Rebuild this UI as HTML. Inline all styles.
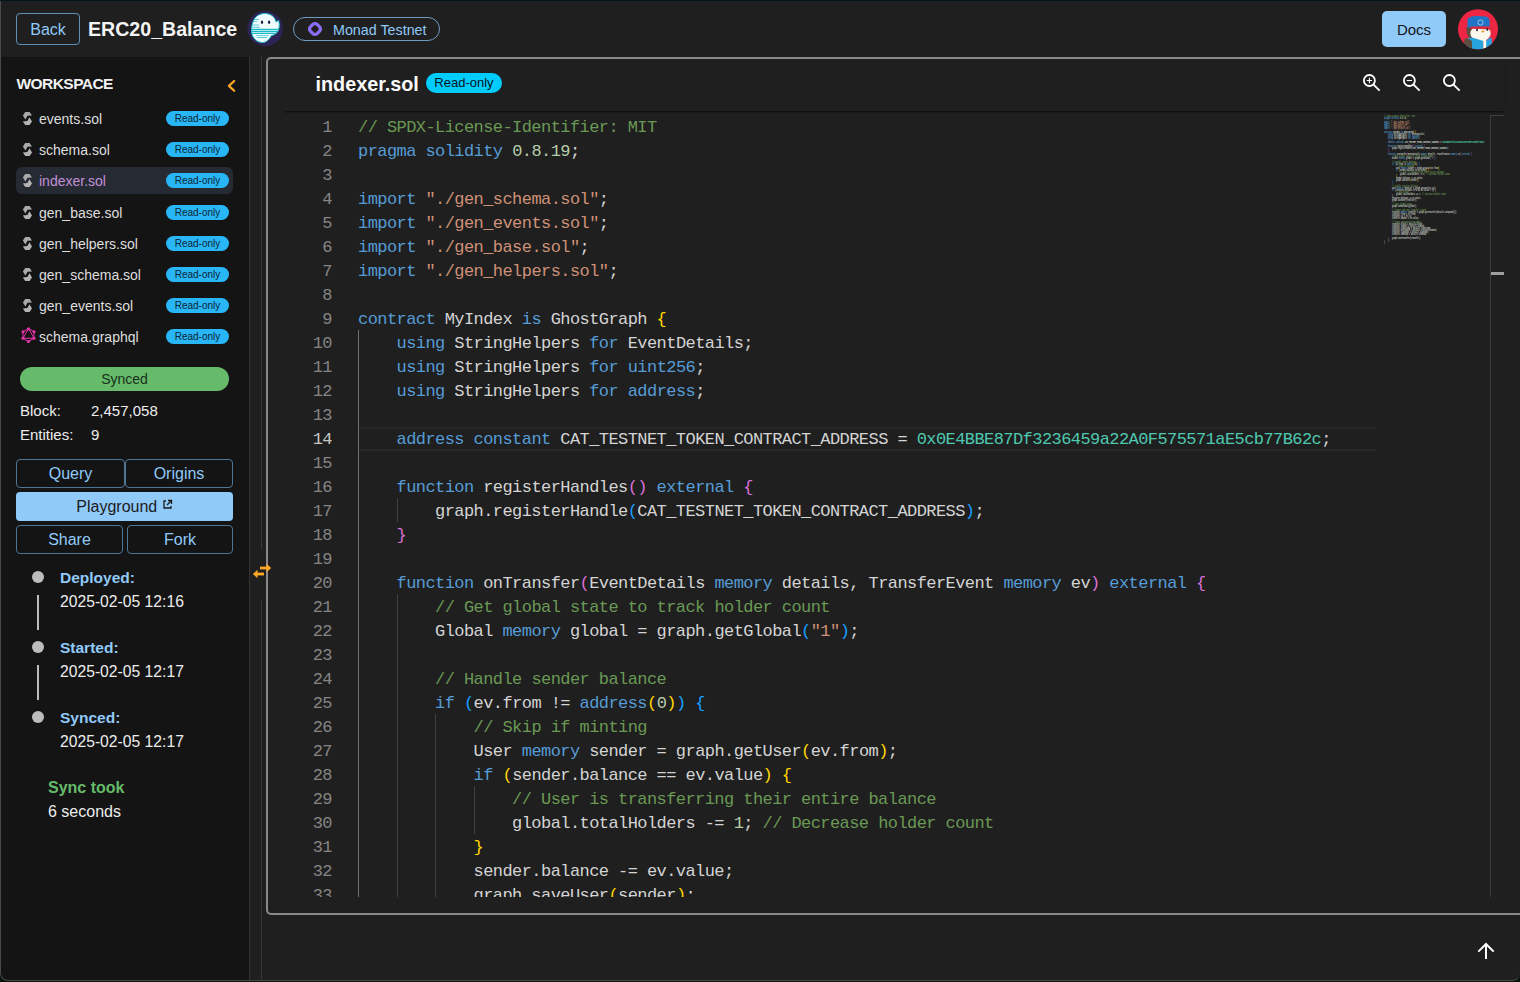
<!DOCTYPE html>
<html><head><meta charset="utf-8">
<style>
*{box-sizing:border-box;margin:0;padding:0}
html,body{width:1520px;height:982px;overflow:hidden;background:#08140c}
body{position:relative;font-family:"Liberation Sans",sans-serif}
.abs{position:absolute}
#app{position:absolute;left:0;top:0;width:1520px;height:981px;background:#1f1f1f;border-radius:0 0 8px 8px;overflow:hidden}
#frame{position:absolute;left:0;top:-10px;width:1520px;height:991px;border-left:1px solid #4a4a4a;border-right:0;border-bottom:1px solid #4a4a4a;border-radius:0 0 8px 8px;pointer-events:none}
#topline{position:absolute;left:0;top:0;width:1520px;height:1px;background:#07141b}
.btn-o{position:absolute;border:1px solid #5f8fb3;border-radius:4px;color:#90caf9;font-size:16px;text-align:center}
#sidebar{position:absolute;left:0;top:57px;width:249px;height:925px;background:#141414}
.file{position:absolute;left:16px;width:217px;height:27px;border-radius:6px}
.file .nm{position:absolute;left:23px;top:6px;font-size:14px;color:#dedede;white-space:nowrap}
.file .ro{position:absolute;left:150px;top:6px;width:63px;height:15px;border-radius:8px;background:#29b6f6;color:#0a2433;font-size:10px;line-height:16px;text-align:center}
.file .ic{position:absolute;left:7px;top:5px}
.cl{position:absolute;left:358px;height:24px;line-height:24px;padding-top:2px;font-family:"Liberation Mono",monospace;font-size:17px;white-space:pre;letter-spacing:-0.57px}
.ln{position:absolute;left:291px;width:41px;height:24px;line-height:24px;padding-top:2px;font-family:"Liberation Mono",monospace;font-size:17px;letter-spacing:-0.57px;text-align:right}
#mm i{position:absolute;height:2px;opacity:0.5}
.tl-dot{position:absolute;left:32px;width:12px;height:12px;border-radius:50%;background:#bdbdbd}
.tl-line{position:absolute;left:37px;width:2px;height:36px;background:#bdbdbd}
.tl-h{position:absolute;left:60px;font-size:15.5px;font-weight:bold;color:#90caf9}
.tl-d{position:absolute;left:60px;font-size:15.7px;color:#ececec}
</style></head>
<body>
<div id="app">
  <!-- HEADER -->
  <div class="btn-o" style="left:16px;top:13px;width:64px;height:32px;line-height:32px">Back</div>
  <div class="abs" style="left:88px;top:18px;font-size:19.6px;font-weight:bold;color:#f4f4f4;white-space:nowrap">ERC20_Balance</div>
  <!-- ghost logo -->
  <svg class="abs" style="left:247px;top:11px" width="36" height="36" viewBox="0 0 36 36">
    <defs><clipPath id="gh"><path d="M18 2.5 C24 2.5 28.5 6.5 28.8 11 L31.5 9.5 C32.5 12 32.5 16 31.5 19 C30 23 26 24 24 25 C22 29 19 31.5 15.5 31.5 C9 31.5 4.5 26 4.5 19.5 C4.5 14 6 10 8 7 C10.5 4 14 2.5 18 2.5 Z"/></clipPath></defs>
    <circle cx="18.2" cy="17.6" r="17.8" fill="#2b2352"/>
    <path d="M18 2.5 C24 2.5 28.5 6.5 28.8 11 L31.5 9.5 C32.5 12 32.5 16 31.5 19 C30 23 26 24 24 25 C22 29 19 31.5 15.5 31.5 C9 31.5 4.5 26 4.5 19.5 C4.5 14 6 10 8 7 C10.5 4 14 2.5 18 2.5 Z" fill="#effbfd" stroke="#22c3d0" stroke-width="1"/>
    <g clip-path="url(#gh)" fill="#1ab9c7">
      <rect x="4" y="17.8" width="30" height="1.3"/>
      <rect x="4" y="19.8" width="30" height="1.3"/>
      <rect x="4" y="21.8" width="30" height="1.2"/>
      <rect x="4" y="8" width="8" height="0.9" opacity="0.7"/>
      <rect x="4" y="10" width="6" height="0.9" opacity="0.7"/>
      <rect x="4" y="13.6" width="8" height="0.9" opacity="0.7"/>
      <rect x="4" y="15.8" width="9" height="0.9" opacity="0.7"/>
      <rect x="9" y="24" width="13" height="1" opacity="0.6"/>
      <rect x="10" y="26" width="10" height="0.9" opacity="0.8"/>
    </g>
    <ellipse cx="15" cy="11.3" rx="1.1" ry="1.7" fill="#1a1840"/>
    <ellipse cx="22.1" cy="11.3" rx="1.1" ry="1.7" fill="#1a1840"/>
  </svg>
  <!-- monad pill -->
  <div class="abs" style="left:293px;top:17px;width:147px;height:24px;border:1px solid #6f9cc2;border-radius:12px"></div>
  <svg class="abs" style="left:305px;top:19px" width="20" height="20" viewBox="0 0 20 20">
    <rect x="5.25" y="5.25" width="9.5" height="9.5" rx="3" transform="rotate(45 10 10)" fill="none" stroke="#8b6df5" stroke-width="3.3"/>
  </svg>
  <div class="abs" style="left:333px;top:21.5px;font-size:14.3px;color:#90caf9;white-space:nowrap">Monad Testnet</div>
  <!-- docs -->
  <div class="abs" style="left:1382px;top:11px;width:64px;height:36px;border-radius:5px;background:#90caf9;color:#161616;font-size:15px;line-height:37px;text-align:center">Docs</div>
  <!-- avatar -->
  <svg class="abs" style="left:1455px;top:6px" width="46" height="46" viewBox="0 0 46 46">
    <defs><clipPath id="av"><circle cx="23" cy="23.2" r="20"/></clipPath></defs>
    <g clip-path="url(#av)">
      <rect width="46" height="46" fill="#ee2644"/>
      <path d="M11.5 21 C11 26 12.5 30 15 33 L18 33 L18 21Z" fill="#5b4f40"/>
      <ellipse cx="25.5" cy="27.5" rx="10.2" ry="7.8" fill="#fbf9ee"/>
      <path d="M12 33 C14 31 18 31.5 22 33 L28.5 35 L28.5 46 L12 46Z" fill="#27a4de"/>
      <path d="M31 35 C33 33 35 31.5 36.5 31.5 L37.5 46 L31 46Z" fill="#27a4de"/>
      <rect x="28.3" y="33" width="2.9" height="13" fill="#fbf9ee"/>
      <path d="M9.5 33 C12 32 15.5 33 17 35.5 L17 46 L8 46Z" fill="#5b4f40"/>
      <path d="M12.5 21.5 L12.5 14 C13 11 17 10 22 10 L31 10.5 C33.5 11 34.7 13 34.7 16 L34.7 21 Z" fill="#1f74c8"/>
      <path d="M15.5 20.5 L34.5 20.3 L38.8 22 L37.5 23.5 L15.5 22.8 Z" fill="#d82a40"/>
      <circle cx="25.5" cy="16.5" r="2.6" fill="none" stroke="#a8cde8" stroke-width="0.9"/>
      <ellipse cx="22" cy="24" rx="0.9" ry="1.2" fill="#1d1d1d"/>
      <ellipse cx="32.3" cy="23.5" rx="0.9" ry="1.2" fill="#1d1d1d"/>
      <ellipse cx="27.9" cy="25.5" rx="1.6" ry="0.9" fill="#e8a23b"/>
    </g>
  </svg>

  <!-- SIDEBAR -->
  <div id="sidebar">
    <div class="abs" style="left:16.5px;top:17.5px;font-size:15.5px;font-weight:bold;color:#f2f2f2;letter-spacing:-0.55px">WORKSPACE</div>
    <svg class="abs" style="left:220px;top:18px" width="20" height="20" viewBox="220 75 20 20"><path d="M234.2 81 L228.9 85.9 L234.2 90.8" fill="none" stroke="#ffa726" stroke-width="2.2" stroke-linecap="round" stroke-linejoin="round"/></svg>
    <div class="file" style="top:48px;"><svg class="ic" style="left:3px;top:4px" width="18" height="19" viewBox="0 0 18 19"><path d="M6.2 2.9 L10.6 2.9 L13 6.6 L8.5 6.8 L6.4 10.5 L3.9 6.6Z" fill="#a9a9a9"/><path d="M10.5 8.3 L13 12.4 L10.6 16 L6.2 16 L3.9 12.4 L8.3 12Z" fill="#b3b3b3"/></svg><div class="nm" style="">events.sol</div><div class="ro">Read-only</div></div>
<div class="file" style="top:79px;"><svg class="ic" style="left:3px;top:4px" width="18" height="19" viewBox="0 0 18 19"><path d="M6.2 2.9 L10.6 2.9 L13 6.6 L8.5 6.8 L6.4 10.5 L3.9 6.6Z" fill="#a9a9a9"/><path d="M10.5 8.3 L13 12.4 L10.6 16 L6.2 16 L3.9 12.4 L8.3 12Z" fill="#b3b3b3"/></svg><div class="nm" style="">schema.sol</div><div class="ro">Read-only</div></div>
<div class="file" style="top:110px;background:#262a33;"><svg class="ic" style="left:3px;top:4px" width="18" height="19" viewBox="0 0 18 19"><path d="M6.2 2.9 L10.6 2.9 L13 6.6 L8.5 6.8 L6.4 10.5 L3.9 6.6Z" fill="#a9a9a9"/><path d="M10.5 8.3 L13 12.4 L10.6 16 L6.2 16 L3.9 12.4 L8.3 12Z" fill="#b3b3b3"/></svg><div class="nm" style="color:#c38fd6;">indexer.sol</div><div class="ro">Read-only</div></div>
<div class="file" style="top:142px;"><svg class="ic" style="left:3px;top:4px" width="18" height="19" viewBox="0 0 18 19"><path d="M6.2 2.9 L10.6 2.9 L13 6.6 L8.5 6.8 L6.4 10.5 L3.9 6.6Z" fill="#a9a9a9"/><path d="M10.5 8.3 L13 12.4 L10.6 16 L6.2 16 L3.9 12.4 L8.3 12Z" fill="#b3b3b3"/></svg><div class="nm" style="">gen_base.sol</div><div class="ro">Read-only</div></div>
<div class="file" style="top:173px;"><svg class="ic" style="left:3px;top:4px" width="18" height="19" viewBox="0 0 18 19"><path d="M6.2 2.9 L10.6 2.9 L13 6.6 L8.5 6.8 L6.4 10.5 L3.9 6.6Z" fill="#a9a9a9"/><path d="M10.5 8.3 L13 12.4 L10.6 16 L6.2 16 L3.9 12.4 L8.3 12Z" fill="#b3b3b3"/></svg><div class="nm" style="">gen_helpers.sol</div><div class="ro">Read-only</div></div>
<div class="file" style="top:204px;"><svg class="ic" style="left:3px;top:4px" width="18" height="19" viewBox="0 0 18 19"><path d="M6.2 2.9 L10.6 2.9 L13 6.6 L8.5 6.8 L6.4 10.5 L3.9 6.6Z" fill="#a9a9a9"/><path d="M10.5 8.3 L13 12.4 L10.6 16 L6.2 16 L3.9 12.4 L8.3 12Z" fill="#b3b3b3"/></svg><div class="nm" style="">gen_schema.sol</div><div class="ro">Read-only</div></div>
<div class="file" style="top:235px;"><svg class="ic" style="left:3px;top:4px" width="18" height="19" viewBox="0 0 18 19"><path d="M6.2 2.9 L10.6 2.9 L13 6.6 L8.5 6.8 L6.4 10.5 L3.9 6.6Z" fill="#a9a9a9"/><path d="M10.5 8.3 L13 12.4 L10.6 16 L6.2 16 L3.9 12.4 L8.3 12Z" fill="#b3b3b3"/></svg><div class="nm" style="">gen_events.sol</div><div class="ro">Read-only</div></div>
<div class="file" style="top:266px;"><svg class="ic" style="left:5px;top:4px" width="15" height="17" viewBox="0 0 15 17"><g fill="none" stroke="#e535ab" stroke-width="1"><path d="M7.5 1.5 L13 4.75 L13 11.25 L7.5 14.5 L2 11.25 L2 4.75Z"/><path d="M7.5 1.5 L13 11.25 L2 11.25Z"/></g><g fill="#e535ab"><circle cx="7.5" cy="1.8" r="1.6"/><circle cx="13" cy="4.75" r="1.6"/><circle cx="13" cy="11.25" r="1.6"/><circle cx="7.5" cy="14.5" r="1.6"/><circle cx="2" cy="11.25" r="1.6"/><circle cx="2" cy="4.75" r="1.6"/></g></svg><div class="nm" style="">schema.graphql</div><div class="ro">Read-only</div></div>
    <div class="abs" style="left:20px;top:310px;width:209px;height:24px;border-radius:12px;background:#66bb6a;color:#17301a;font-size:14px;line-height:24px;text-align:center">Synced</div>
    <div class="abs" style="left:20px;top:345px;font-size:15px;color:#ededed">Block:</div>
    <div class="abs" style="left:91px;top:345px;font-size:15px;color:#ededed">2,457,058</div>
    <div class="abs" style="left:20px;top:369px;font-size:15px;color:#ededed">Entities:</div>
    <div class="abs" style="left:91px;top:369px;font-size:15px;color:#ededed">9</div>
    <div class="btn-o" style="left:16px;top:402px;width:109px;height:29px;line-height:27px;border-color:#4f7594">Query</div>
    <div class="btn-o" style="left:125px;top:402px;width:108px;height:29px;line-height:27px;border-color:#4f7594">Origins</div>
    <div class="abs" style="left:16px;top:435px;width:217px;height:29px;border-radius:4px;background:#90caf9;color:#1b1b1b;font-size:16px;line-height:29px;text-align:center">Playground <svg style="vertical-align:2px" width="11" height="11" viewBox="0 0 11 11"><path d="M4 2 H2 V9 H9 V7" fill="none" stroke="#1b1b1b" stroke-width="1.3"/><path d="M5 6 L9.5 1.5 M6 1.5 H9.5 V5" fill="none" stroke="#1b1b1b" stroke-width="1.3"/></svg></div>
    <div class="btn-o" style="left:16px;top:468px;width:107px;height:29px;line-height:27px;border-color:#4f7594">Share</div>
    <div class="btn-o" style="left:127px;top:468px;width:106px;height:29px;line-height:27px;border-color:#4f7594">Fork</div>
    <!-- timeline -->
    <div class="tl-dot" style="top:514px"></div>
    <div class="tl-line" style="top:538px;height:35px"></div>
    <div class="tl-h" style="top:512px">Deployed:</div>
    <div class="tl-d" style="top:536px">2025-02-05 12:16</div>
    <div class="tl-dot" style="top:584px"></div>
    <div class="tl-line" style="top:608px;height:35px"></div>
    <div class="tl-h" style="top:582px">Started:</div>
    <div class="tl-d" style="top:606px">2025-02-05 12:17</div>
    <div class="tl-dot" style="top:654px"></div>
    <div class="tl-h" style="top:652px">Synced:</div>
    <div class="tl-d" style="top:676px">2025-02-05 12:17</div>
    <div class="abs" style="left:48px;top:722px;font-size:16px;font-weight:bold;color:#66bb6a">Sync took</div>
    <div class="abs" style="left:48px;top:746px;font-size:16px;color:#ececec">6 seconds</div>
  </div>

  <!-- splitter -->
  <div class="abs" style="left:249px;top:57px;width:1px;height:925px;background:#333"></div>
  <div class="abs" style="left:261px;top:57px;width:1px;height:492px;background:#383838"></div>
  <div class="abs" style="left:261px;top:600px;width:1px;height:382px;background:#383838"></div>
  <svg class="abs" style="left:250px;top:560px;z-index:5" width="24" height="22" viewBox="250 560 24 22">
    <rect x="260" y="566.6" width="8" height="2.8" fill="#ffa726"/><path d="M266.5 563.8 L271.2 568 L266.5 572.2Z" fill="#ffa726"/>
    <rect x="256" y="572.6" width="8" height="2.8" fill="#ffa726"/><path d="M257.5 569.8 L252.8 574 L257.5 578.2Z" fill="#ffa726"/>
  </svg>

  <!-- EDITOR -->
  <div class="abs" style="left:266px;top:57px;width:1260px;height:858px;border:2px solid #8a8a8a;border-radius:5px"></div>
  <div class="abs" style="left:284px;top:59px;width:1220px;height:52px;background:#1f1f1f;box-shadow:0 2px 2px -1px rgba(0,0,0,0.6)"></div>
  <div class="abs" style="left:315.5px;top:73px;font-size:19.8px;font-weight:bold;color:#fafafa;white-space:nowrap">indexer.sol</div>
  <div class="abs" style="left:426px;top:73px;width:76px;height:20px;border-radius:10px;background:#00ccfc;color:#02131c;font-size:13px;line-height:20px;text-align:center">Read-only</div>
  <!-- zoom icons -->
  <svg class="abs" style="left:1362px;top:73px" width="20" height="20" viewBox="0 0 20 20"><circle cx="7.4" cy="7.5" r="5.5" fill="none" stroke="#fff" stroke-width="1.8"/><path d="M11.4 11.5 L17.6 17.7" stroke="#fff" stroke-width="1.8"/><path d="M7.4 4.8 V10.2 M4.7 7.5 H10.1" stroke="#fff" stroke-width="1.1"/></svg>
  <svg class="abs" style="left:1402px;top:73px" width="20" height="20" viewBox="0 0 20 20"><circle cx="7.4" cy="7.5" r="5.5" fill="none" stroke="#fff" stroke-width="1.8"/><path d="M11.4 11.5 L17.6 17.7" stroke="#fff" stroke-width="1.8"/><path d="M4.7 7.5 H10.1" stroke="#fff" stroke-width="1.1"/></svg>
  <svg class="abs" style="left:1442px;top:73px" width="20" height="20" viewBox="0 0 20 20"><circle cx="7.4" cy="7.5" r="5.5" fill="none" stroke="#fff" stroke-width="1.8"/><path d="M11.4 11.5 L17.6 17.7" stroke="#fff" stroke-width="1.8"/></svg>

  <!-- code area -->
  <div class="abs" style="left:268px;top:111px;width:1252px;height:786px;overflow:hidden">
   <div class="abs" style="left:-268px;top:-111px;width:1520px;height:982px">
    <div class="abs" style="left:358px;top:427px;width:1018px;height:24px;border-top:2px solid #282828;border-bottom:2px solid #282828"></div>
    <div style="position:absolute;left:358px;top:330px;width:1px;height:576px;background:#707070"></div>
<div style="position:absolute;left:397px;top:498px;width:1px;height:24px;background:#404040"></div>
<div style="position:absolute;left:397px;top:594px;width:1px;height:312px;background:#404040"></div>
<div style="position:absolute;left:435px;top:714px;width:1px;height:192px;background:#404040"></div>
<div style="position:absolute;left:474px;top:786px;width:1px;height:48px;background:#404040"></div>
    <div class="cl" style="top:114px"><span style="color:#6a9955">// SPDX-License-Identifier: MIT</span></div>
<div class="ln" style="top:114px;color:#858585">1</div>
<div class="cl" style="top:138px"><span style="color:#569cd6">pragma</span><span style="color:#d4d4d4"> </span><span style="color:#569cd6">solidity</span><span style="color:#d4d4d4"> </span><span style="color:#b5cea8">0.8.19</span><span style="color:#d4d4d4">;</span></div>
<div class="ln" style="top:138px;color:#858585">2</div>
<div class="cl" style="top:162px"></div>
<div class="ln" style="top:162px;color:#858585">3</div>
<div class="cl" style="top:186px"><span style="color:#569cd6">import</span><span style="color:#d4d4d4"> </span><span style="color:#ce9178">&quot;./gen_schema.sol&quot;</span><span style="color:#d4d4d4">;</span></div>
<div class="ln" style="top:186px;color:#858585">4</div>
<div class="cl" style="top:210px"><span style="color:#569cd6">import</span><span style="color:#d4d4d4"> </span><span style="color:#ce9178">&quot;./gen_events.sol&quot;</span><span style="color:#d4d4d4">;</span></div>
<div class="ln" style="top:210px;color:#858585">5</div>
<div class="cl" style="top:234px"><span style="color:#569cd6">import</span><span style="color:#d4d4d4"> </span><span style="color:#ce9178">&quot;./gen_base.sol&quot;</span><span style="color:#d4d4d4">;</span></div>
<div class="ln" style="top:234px;color:#858585">6</div>
<div class="cl" style="top:258px"><span style="color:#569cd6">import</span><span style="color:#d4d4d4"> </span><span style="color:#ce9178">&quot;./gen_helpers.sol&quot;</span><span style="color:#d4d4d4">;</span></div>
<div class="ln" style="top:258px;color:#858585">7</div>
<div class="cl" style="top:282px"></div>
<div class="ln" style="top:282px;color:#858585">8</div>
<div class="cl" style="top:306px"><span style="color:#569cd6">contract</span><span style="color:#d4d4d4"> MyIndex </span><span style="color:#569cd6">is</span><span style="color:#d4d4d4"> GhostGraph </span><span style="color:#ffd700">{</span></div>
<div class="ln" style="top:306px;color:#858585">9</div>
<div class="cl" style="top:330px"><span style="color:#d4d4d4">    </span><span style="color:#569cd6">using</span><span style="color:#d4d4d4"> StringHelpers </span><span style="color:#569cd6">for</span><span style="color:#d4d4d4"> EventDetails;</span></div>
<div class="ln" style="top:330px;color:#858585">10</div>
<div class="cl" style="top:354px"><span style="color:#d4d4d4">    </span><span style="color:#569cd6">using</span><span style="color:#d4d4d4"> StringHelpers </span><span style="color:#569cd6">for</span><span style="color:#d4d4d4"> </span><span style="color:#569cd6">uint256</span><span style="color:#d4d4d4">;</span></div>
<div class="ln" style="top:354px;color:#858585">11</div>
<div class="cl" style="top:378px"><span style="color:#d4d4d4">    </span><span style="color:#569cd6">using</span><span style="color:#d4d4d4"> StringHelpers </span><span style="color:#569cd6">for</span><span style="color:#d4d4d4"> </span><span style="color:#569cd6">address</span><span style="color:#d4d4d4">;</span></div>
<div class="ln" style="top:378px;color:#858585">12</div>
<div class="cl" style="top:402px"></div>
<div class="ln" style="top:402px;color:#858585">13</div>
<div class="cl" style="top:426px"><span style="color:#d4d4d4">    </span><span style="color:#569cd6">address</span><span style="color:#d4d4d4"> </span><span style="color:#569cd6">constant</span><span style="color:#d4d4d4"> CAT_TESTNET_TOKEN_CONTRACT_ADDRESS = </span><span style="color:#4ec9b0">0x0E4BBE87Df3236459a22A0F575571aE5cb77B62c</span><span style="color:#d4d4d4">;</span></div>
<div class="ln" style="top:426px;color:#c6c6c6">14</div>
<div class="cl" style="top:450px"></div>
<div class="ln" style="top:450px;color:#858585">15</div>
<div class="cl" style="top:474px"><span style="color:#d4d4d4">    </span><span style="color:#569cd6">function</span><span style="color:#d4d4d4"> registerHandles</span><span style="color:#da70d6">()</span><span style="color:#d4d4d4"> </span><span style="color:#569cd6">external</span><span style="color:#d4d4d4"> </span><span style="color:#da70d6">{</span></div>
<div class="ln" style="top:474px;color:#858585">16</div>
<div class="cl" style="top:498px"><span style="color:#d4d4d4">        graph.registerHandle</span><span style="color:#179fff">(</span><span style="color:#d4d4d4">CAT_TESTNET_TOKEN_CONTRACT_ADDRESS</span><span style="color:#179fff">)</span><span style="color:#d4d4d4">;</span></div>
<div class="ln" style="top:498px;color:#858585">17</div>
<div class="cl" style="top:522px"><span style="color:#d4d4d4">    </span><span style="color:#da70d6">}</span></div>
<div class="ln" style="top:522px;color:#858585">18</div>
<div class="cl" style="top:546px"></div>
<div class="ln" style="top:546px;color:#858585">19</div>
<div class="cl" style="top:570px"><span style="color:#d4d4d4">    </span><span style="color:#569cd6">function</span><span style="color:#d4d4d4"> onTransfer</span><span style="color:#da70d6">(</span><span style="color:#d4d4d4">EventDetails </span><span style="color:#569cd6">memory</span><span style="color:#d4d4d4"> details, TransferEvent </span><span style="color:#569cd6">memory</span><span style="color:#d4d4d4"> ev</span><span style="color:#da70d6">)</span><span style="color:#d4d4d4"> </span><span style="color:#569cd6">external</span><span style="color:#d4d4d4"> </span><span style="color:#da70d6">{</span></div>
<div class="ln" style="top:570px;color:#858585">20</div>
<div class="cl" style="top:594px"><span style="color:#d4d4d4">        </span><span style="color:#6a9955">// Get global state to track holder count</span></div>
<div class="ln" style="top:594px;color:#858585">21</div>
<div class="cl" style="top:618px"><span style="color:#d4d4d4">        Global </span><span style="color:#569cd6">memory</span><span style="color:#d4d4d4"> global = graph.getGlobal</span><span style="color:#179fff">(</span><span style="color:#ce9178">&quot;1&quot;</span><span style="color:#179fff">)</span><span style="color:#d4d4d4">;</span></div>
<div class="ln" style="top:618px;color:#858585">22</div>
<div class="cl" style="top:642px"></div>
<div class="ln" style="top:642px;color:#858585">23</div>
<div class="cl" style="top:666px"><span style="color:#d4d4d4">        </span><span style="color:#6a9955">// Handle sender balance</span></div>
<div class="ln" style="top:666px;color:#858585">24</div>
<div class="cl" style="top:690px"><span style="color:#d4d4d4">        </span><span style="color:#569cd6">if</span><span style="color:#d4d4d4"> </span><span style="color:#179fff">(</span><span style="color:#d4d4d4">ev.from != </span><span style="color:#569cd6">address</span><span style="color:#ffd700">(</span><span style="color:#b5cea8">0</span><span style="color:#ffd700">)</span><span style="color:#179fff">)</span><span style="color:#d4d4d4"> </span><span style="color:#179fff">{</span></div>
<div class="ln" style="top:690px;color:#858585">25</div>
<div class="cl" style="top:714px"><span style="color:#d4d4d4">            </span><span style="color:#6a9955">// Skip if minting</span></div>
<div class="ln" style="top:714px;color:#858585">26</div>
<div class="cl" style="top:738px"><span style="color:#d4d4d4">            User </span><span style="color:#569cd6">memory</span><span style="color:#d4d4d4"> sender = graph.getUser</span><span style="color:#ffd700">(</span><span style="color:#d4d4d4">ev.from</span><span style="color:#ffd700">)</span><span style="color:#d4d4d4">;</span></div>
<div class="ln" style="top:738px;color:#858585">27</div>
<div class="cl" style="top:762px"><span style="color:#d4d4d4">            </span><span style="color:#569cd6">if</span><span style="color:#d4d4d4"> </span><span style="color:#ffd700">(</span><span style="color:#d4d4d4">sender.balance == ev.value</span><span style="color:#ffd700">)</span><span style="color:#d4d4d4"> </span><span style="color:#ffd700">{</span></div>
<div class="ln" style="top:762px;color:#858585">28</div>
<div class="cl" style="top:786px"><span style="color:#d4d4d4">                </span><span style="color:#6a9955">// User is transferring their entire balance</span></div>
<div class="ln" style="top:786px;color:#858585">29</div>
<div class="cl" style="top:810px"><span style="color:#d4d4d4">                global.totalHolders -= </span><span style="color:#b5cea8">1</span><span style="color:#d4d4d4">; </span><span style="color:#6a9955">// Decrease holder count</span></div>
<div class="ln" style="top:810px;color:#858585">30</div>
<div class="cl" style="top:834px"><span style="color:#d4d4d4">            </span><span style="color:#ffd700">}</span></div>
<div class="ln" style="top:834px;color:#858585">31</div>
<div class="cl" style="top:858px"><span style="color:#d4d4d4">            sender.balance -= ev.value;</span></div>
<div class="ln" style="top:858px;color:#858585">32</div>
<div class="cl" style="top:882px"><span style="color:#d4d4d4">            graph.saveUser</span><span style="color:#ffd700">(</span><span style="color:#d4d4d4">sender</span><span style="color:#ffd700">)</span><span style="color:#d4d4d4">;</span></div>
<div class="ln" style="top:882px;color:#858585">33</div>
   </div>
  </div>
  <!-- minimap -->
  <div id="mm"><div style="position:absolute;left:1384px;top:115px;font-family:'Liberation Mono',monospace;font-size:16.667px;line-height:10px;white-space:pre;transform:scale(0.1,0.2);transform-origin:0 0;font-weight:bold"><span style="color:#6a9955">// SPDX-License-Identifier: MIT</span>
<span style="color:#569cd6">pragma</span><span style="color:#d4d4d4"> </span><span style="color:#569cd6">solidity</span><span style="color:#d4d4d4"> </span><span style="color:#b5cea8">0.8.19</span><span style="color:#d4d4d4">;</span>

<span style="color:#569cd6">import</span><span style="color:#d4d4d4"> </span><span style="color:#ce9178">&quot;./gen_schema.sol&quot;</span><span style="color:#d4d4d4">;</span>
<span style="color:#569cd6">import</span><span style="color:#d4d4d4"> </span><span style="color:#ce9178">&quot;./gen_events.sol&quot;</span><span style="color:#d4d4d4">;</span>
<span style="color:#569cd6">import</span><span style="color:#d4d4d4"> </span><span style="color:#ce9178">&quot;./gen_base.sol&quot;</span><span style="color:#d4d4d4">;</span>
<span style="color:#569cd6">import</span><span style="color:#d4d4d4"> </span><span style="color:#ce9178">&quot;./gen_helpers.sol&quot;</span><span style="color:#d4d4d4">;</span>

<span style="color:#569cd6">contract</span><span style="color:#d4d4d4"> MyIndex </span><span style="color:#569cd6">is</span><span style="color:#d4d4d4"> GhostGraph </span><span style="color:#ffd700">{</span>
<span style="color:#d4d4d4">    </span><span style="color:#569cd6">using</span><span style="color:#d4d4d4"> StringHelpers </span><span style="color:#569cd6">for</span><span style="color:#d4d4d4"> EventDetails;</span>
<span style="color:#d4d4d4">    </span><span style="color:#569cd6">using</span><span style="color:#d4d4d4"> StringHelpers </span><span style="color:#569cd6">for</span><span style="color:#d4d4d4"> </span><span style="color:#569cd6">uint256</span><span style="color:#d4d4d4">;</span>
<span style="color:#d4d4d4">    </span><span style="color:#569cd6">using</span><span style="color:#d4d4d4"> StringHelpers </span><span style="color:#569cd6">for</span><span style="color:#d4d4d4"> </span><span style="color:#569cd6">address</span><span style="color:#d4d4d4">;</span>

<span style="color:#d4d4d4">    </span><span style="color:#569cd6">address</span><span style="color:#d4d4d4"> </span><span style="color:#569cd6">constant</span><span style="color:#d4d4d4"> CAT_TESTNET_TOKEN_CONTRACT_ADDRESS = </span><span style="color:#4ec9b0">0x0E4BBE87Df3236459a22A0F575571aE5cb77B62c</span><span style="color:#d4d4d4">;</span>

<span style="color:#d4d4d4">    </span><span style="color:#569cd6">function</span><span style="color:#d4d4d4"> registerHandles</span><span style="color:#da70d6">()</span><span style="color:#d4d4d4"> </span><span style="color:#569cd6">external</span><span style="color:#d4d4d4"> </span><span style="color:#da70d6">{</span>
<span style="color:#d4d4d4">        graph.registerHandle</span><span style="color:#179fff">(</span><span style="color:#d4d4d4">CAT_TESTNET_TOKEN_CONTRACT_ADDRESS</span><span style="color:#179fff">)</span><span style="color:#d4d4d4">;</span>
<span style="color:#d4d4d4">    </span><span style="color:#da70d6">}</span>

<span style="color:#d4d4d4">    </span><span style="color:#569cd6">function</span><span style="color:#d4d4d4"> onTransfer</span><span style="color:#da70d6">(</span><span style="color:#d4d4d4">EventDetails </span><span style="color:#569cd6">memory</span><span style="color:#d4d4d4"> details, TransferEvent </span><span style="color:#569cd6">memory</span><span style="color:#d4d4d4"> ev</span><span style="color:#da70d6">)</span><span style="color:#d4d4d4"> </span><span style="color:#569cd6">external</span><span style="color:#d4d4d4"> </span><span style="color:#da70d6">{</span>
<span style="color:#d4d4d4">        </span><span style="color:#6a9955">// Get global state to track holder count</span>
<span style="color:#d4d4d4">        Global </span><span style="color:#569cd6">memory</span><span style="color:#d4d4d4"> global = graph.getGlobal</span><span style="color:#179fff">(</span><span style="color:#ce9178">&quot;1&quot;</span><span style="color:#179fff">)</span><span style="color:#d4d4d4">;</span>

<span style="color:#d4d4d4">        </span><span style="color:#6a9955">// Handle sender balance</span>
<span style="color:#d4d4d4">        </span><span style="color:#569cd6">if</span><span style="color:#d4d4d4"> </span><span style="color:#179fff">(</span><span style="color:#d4d4d4">ev.from != </span><span style="color:#569cd6">address</span><span style="color:#ffd700">(</span><span style="color:#b5cea8">0</span><span style="color:#ffd700">)</span><span style="color:#179fff">)</span><span style="color:#d4d4d4"> </span><span style="color:#179fff">{</span>
<span style="color:#d4d4d4">            </span><span style="color:#6a9955">// Skip if minting</span>
<span style="color:#d4d4d4">            User </span><span style="color:#569cd6">memory</span><span style="color:#d4d4d4"> sender = graph.getUser</span><span style="color:#ffd700">(</span><span style="color:#d4d4d4">ev.from</span><span style="color:#ffd700">)</span><span style="color:#d4d4d4">;</span>
<span style="color:#d4d4d4">            </span><span style="color:#569cd6">if</span><span style="color:#d4d4d4"> </span><span style="color:#ffd700">(</span><span style="color:#d4d4d4">sender.balance == ev.value</span><span style="color:#ffd700">)</span><span style="color:#d4d4d4"> </span><span style="color:#ffd700">{</span>
<span style="color:#d4d4d4">                </span><span style="color:#6a9955">// User is transferring their entire balance</span>
<span style="color:#d4d4d4">                global.totalHolders -= </span><span style="color:#b5cea8">1</span><span style="color:#d4d4d4">; </span><span style="color:#6a9955">// Decrease holder count</span>
<span style="color:#d4d4d4">            </span><span style="color:#ffd700">}</span>
<span style="color:#d4d4d4">            sender.balance -= ev.value;</span>
<span style="color:#d4d4d4">            graph.saveUser</span><span style="color:#ffd700">(</span><span style="color:#d4d4d4">sender</span><span style="color:#ffd700">)</span><span style="color:#d4d4d4">;</span>
<span style="color:#d4d4d4">        </span><span style="color:#179fff">}</span>

<span style="color:#d4d4d4">        </span><span style="color:#6a9955">// Handle receiver balance</span>
<span style="color:#d4d4d4">        User </span><span style="color:#569cd6">memory</span><span style="color:#d4d4d4"> receiver = graph.getUser(ev.to);</span>
<span style="color:#d4d4d4">        </span><span style="color:#569cd6">if</span><span style="color:#d4d4d4"> (receiver.balance == 0 &amp;&amp; ev.value &gt; 0) {</span>
<span style="color:#d4d4d4">            </span><span style="color:#6a9955">// New holder</span>
<span style="color:#d4d4d4">            global.totalHolders += </span><span style="color:#b5cea8">1</span><span style="color:#d4d4d4">; </span><span style="color:#6a9955">// Increase holder count</span>
<span style="color:#d4d4d4">        }</span>
<span style="color:#d4d4d4">        receiver.balance += ev.value;</span>
<span style="color:#d4d4d4">        graph.saveUser(receiver);</span>

<span style="color:#d4d4d4">        </span><span style="color:#6a9955">// Save global state</span>
<span style="color:#d4d4d4">        graph.saveGlobal(global);</span>

<span style="color:#d4d4d4">        </span><span style="color:#6a9955">// Create and save transfer record</span>
<span style="color:#d4d4d4">        Transfer </span><span style="color:#569cd6">memory</span><span style="color:#d4d4d4"> transfer = graph.getTransfer(details.uniqueId());</span>
<span style="color:#d4d4d4">        transfer.from = ev.from;</span>
<span style="color:#d4d4d4">        transfer.to = ev.to;</span>
<span style="color:#d4d4d4">        transfer.amount = ev.value;</span>

<span style="color:#d4d4d4">        </span><span style="color:#6a9955">// Store transaction metadata</span>
<span style="color:#d4d4d4">        transfer.block = details.block;</span>
<span style="color:#d4d4d4">        transfer.txHash = details.txHash;</span>
<span style="color:#d4d4d4">        transfer.timestamp = details.timestamp;</span>
<span style="color:#d4d4d4">        transfer.blockHash = details.transactionHash;</span>
<span style="color:#d4d4d4">        transfer.logIndex = details.logIndex;</span>
<span style="color:#d4d4d4">        transfer.chainId = details.chainId;</span>

<span style="color:#d4d4d4">        graph.saveTransfer(transfer);</span>
<span style="color:#d4d4d4">    }</span>
<span style="color:#d4d4d4">}</span></div></div>
  <div class="abs" style="left:1490px;top:115px;width:1px;height:782px;background:#3d3d3d"></div>
  <div class="abs" style="left:1490px;top:115px;width:14px;height:1px;background:#3d3d3d"></div>
  <div class="abs" style="left:1491px;top:272px;width:13px;height:3px;background:#9e9e9e"></div>

  <!-- scroll to top arrow -->
  <svg class="abs" style="left:1476px;top:941px" width="20" height="20" viewBox="0 0 20 20"><path d="M10 3 V18" stroke="#fff" stroke-width="2"/><path d="M2.3 10.6 L10 3 L17.7 10.6" fill="none" stroke="#fff" stroke-width="2"/></svg>
</div>
<div id="frame"></div>
<div id="topline"></div>
</body></html>
